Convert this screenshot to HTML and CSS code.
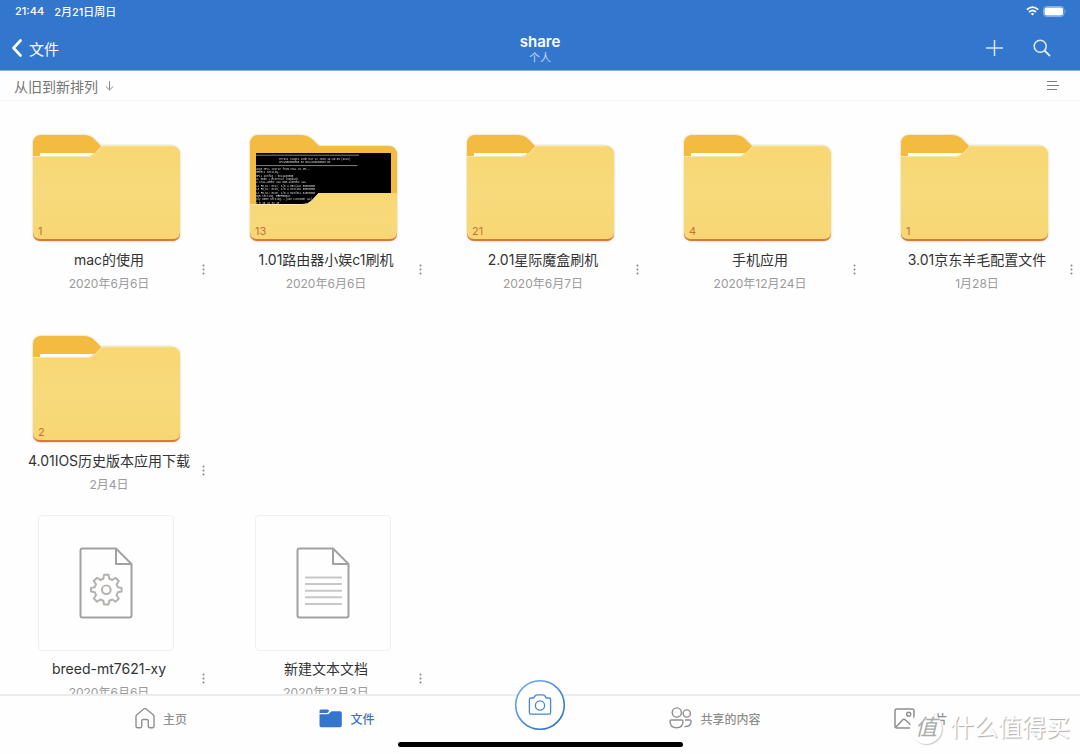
FILE: index.html
```html
<!DOCTYPE html>
<html lang="zh-CN">
<head>
<meta charset="utf-8">
<meta name="viewport" content="width=device-width, initial-scale=1">
<title>share</title>
<link rel="stylesheet" href="styles.css">
</head>
<body>
<svg class="defs" width="0" height="0" aria-hidden="true">
  <defs>
    <linearGradient id="paper" x1="0" y1="0" x2="0" y2="1">
      <stop offset="0" stop-color="#f8d773"/><stop offset=".5" stop-color="#f7da7b"/><stop offset="1" stop-color="#f7d774"/>
    </linearGradient>
    <linearGradient id="ring" x1="0" y1="0" x2="1" y2="1">
      <stop offset="0" stop-color="#76b2ea"/><stop offset="1" stop-color="#2469c9"/>
    </linearGradient>
    <symbol id="folder" viewBox="0 0 149 109">
      <path d="M1 30V9a8 8 0 0 1 8-8h42q7 0 11 4l7 7-14 18z" fill="#f4bb41"/>
      <path d="M8 19h54l-6 5H8z" fill="#fff"/>
      <path d="M1 30v70a7 7 0 0 0 7 7h133a7 7 0 0 0 7-7V70H1z" fill="#d9783a"/>
      <path d="M1 22.500h54q5 0 8-3l7-7.500h70a8 8 0 0 1 8 8v78q0 7-7 7H8q-7 0-7-7z" fill="url(#paper)"/>
      <path d="M1 22.500h54q5 0 8-3l7-7.500H140" fill="none" stroke="#fbe7a9"/>
    </symbol>
    <symbol id="page" viewBox="0 0 54 72">
      <path d="M37 1.500H3.500q-2 0-2 2v65q0 2 2 2h47q2 0 2-2V17zV17h15.500" fill="none" stroke="#a1a1a1" stroke-width="2" stroke-linejoin="round"/>
    </symbol>
    <symbol id="kebab" viewBox="0 0 3 11">
      <circle cx="1.500" cy="1.500" r="1"/><circle cx="1.500" cy="5.500" r="1"/><circle cx="1.500" cy="9.500" r="1"/>
    </symbol>
  </defs>
</svg>

<header class="top">
  <div class="status">
    <span>21:44</span><span>2月21日周日</span>
    <span class="status-icons">
      <svg width="13" height="10" viewBox="0 0 13 10"><g fill="none" stroke="#fff" stroke-width="1.700"><path d="M.8 3.700q5.700-5 11.400 0"/><path d="M3 6q3.500-3 7 0"/></g><path d="M4.700 7.700q1.800-1.400 3.600 0L6.500 9.600z" fill="#fff"/></svg>
      <svg width="24" height="11" viewBox="0 0 24 11"><rect x=".5" y=".5" width="20.500" height="10" rx="3" fill="none" stroke="#86b0e6"/><rect x="1.500" y="1.500" width="18.500" height="8" rx="2" fill="#fff"/><path d="M22.200 4q1.500 1.500 0 3z" fill="#86b0e6"/></svg>
    </span>
  </div>
  <div class="nav">
    <button class="back"><svg width="12" height="18" viewBox="0 0 12 18"><path d="M9.500 1.500 2.500 9l7 7.500" fill="none" stroke="#fff" stroke-width="2.600" stroke-linecap="round" stroke-linejoin="round"/></svg>文件</button>
    <div class="heading"><h1>share</h1><p>个人</p></div>
    <div class="actions">
      <button aria-label="添加"><svg width="18" height="18" viewBox="0 0 18 18"><path d="M9.500 1v16M1 9h17" stroke="#d9e6f8" stroke-width="1.500"/></svg></button>
      <button aria-label="搜索"><svg width="18" height="18" viewBox="0 0 18 18"><g fill="none" stroke="#dfeafa" stroke-width="1.500"><circle cx="7.200" cy="7.200" r="6"/><path d="m11.500 11.500 5.500 5.500" stroke-width="1.800"/></g></svg></button>
    </div>
  </div>
</header>

<div class="sort">
  <button class="order">从旧到新排列 <svg width="9" height="10" viewBox="0 0 9 10"><path d="M4.500 0v9M.8 5.500l3.700 3.500 3.700-3.500" fill="none" stroke="#8c8c8c"/></svg></button>
  <button aria-label="视图"><svg width="13" height="11" viewBox="0 0 13 11"><path d="M1 1.500h10M1 5.500h12M1 9.500h10" stroke="#7d7d7d" stroke-width="1.200"/></svg></button>
</div>

<main class="files">
  <section class="grid folders">
    <article class="item">
      <div class="folder"><svg><use href="#folder"/></svg><span class="count">1</span></div>
      <div class="meta"><div class="text"><h2>mac的使用</h2><p>2020年6月6日</p></div><button class="more" aria-label="更多"><svg><use href="#kebab"/></svg></button></div>
    </article>
    <article class="item">
      <div class="folder">
        <svg viewBox="0 0 149 109">
          <path d="M1 100V9a8 8 0 0 1 8-8h42q7 0 12 4l7 7h70a8 8 0 0 1 8 8v80z" fill="#f4bb41"/>
          <path d="M1 80v20a7 7 0 0 0 7 7h133a7 7 0 0 0 7-7V80z" fill="#d9783a"/>
          <svg x="7" y="19" width="135" height="52" viewBox="0 0 1350 520">
            <rect width="1350" height="520" fill="#000"/>
            <path d="M0 22h1030M0 126h1015" stroke="#bbb" stroke-width="7"/>
            <g class="terminal">
              <text x="230" y="65">MT7621   stage1 code Mar 12 2015 14:43:36 (ASIC)</text>
              <text x="230" y="100">CPU=500000000 HZ BUS=166666666 HZ</text>
              <text x="0" y="168">ange MPLL source from XTAL to CR...</text>
              <text x="0" y="202"> MEMPLL setting..</text>
              <text x="0" y="236">MPLL Config : 0x11100000</text>
              <text x="0" y="270">LL mode + External loopback</text>
              <text x="0" y="304">= XTAL-40Mhz === DDR-1200Mhz ===</text>
              <text x="0" y="338">L2 FB_DL: 0x12, 1/0 = 582/442 00000000</text>
              <text x="0" y="372">L3 FB_DL: 0x15, 1/0 = 573/451 00000000</text>
              <text x="0" y="406">L4 FB_DL: 0x10, 1/0 = 513/511 01000000</text>
              <text x="0" y="440"> DDR Setting, EEEPROM97</text>
              <text x="0" y="474">ply DDR3 Setting...(use customer AC)</text>
              <text x="0" y="508">       0    8   16   24   32   40</text>
            </g>
          </svg>
          <path d="M1 70.500h52q6 0 9-3l8-8.500h78v39q0 7-7 7H8q-7 0-7-7z" fill="url(#paper)"/>
          <path d="M1 70.500h52q6 0 9-3l8-8.500" fill="none" stroke="#fbe7a9"/>
        </svg>
        <span class="count">13</span>
      </div>
      <div class="meta"><div class="text"><h2>1.01路由器小娱c1刷机</h2><p>2020年6月6日</p></div><button class="more" aria-label="更多"><svg><use href="#kebab"/></svg></button></div>
    </article>
    <article class="item">
      <div class="folder"><svg><use href="#folder"/></svg><span class="count">21</span></div>
      <div class="meta"><div class="text"><h2>2.01星际魔盒刷机</h2><p>2020年6月7日</p></div><button class="more" aria-label="更多"><svg><use href="#kebab"/></svg></button></div>
    </article>
    <article class="item">
      <div class="folder"><svg><use href="#folder"/></svg><span class="count">4</span></div>
      <div class="meta"><div class="text"><h2>手机应用</h2><p>2020年12月24日</p></div><button class="more" aria-label="更多"><svg><use href="#kebab"/></svg></button></div>
    </article>
    <article class="item">
      <div class="folder"><svg><use href="#folder"/></svg><span class="count">1</span></div>
      <div class="meta"><div class="text"><h2>3.01京东羊毛配置文件</h2><p>1月28日</p></div><button class="more" aria-label="更多"><svg><use href="#kebab"/></svg></button></div>
    </article>
    <article class="item">
      <div class="folder"><svg><use href="#folder"/></svg><span class="count">2</span></div>
      <div class="meta"><div class="text"><h2>4.01IOS历史版本应用下载</h2><p>2月4日</p></div><button class="more" aria-label="更多"><svg><use href="#kebab"/></svg></button></div>
    </article>
  </section>
  <section class="grid">
    <article class="item">
      <div class="thumb"><svg viewBox="0 0 54 72"><use href="#page"/>
        <g transform="translate(3 4) scale(.9)" fill="none" stroke="#b5b1ae" stroke-width="2.200" stroke-linejoin="round"><circle cx="27" cy="43" r="4.800"/>
        <path d="M24.500 26.500h5l.8 4.300 3.400 1.400 3.600-2.500 3.600 3.600-2.500 3.600 1.400 3.300 4.200.8v4l-4.200.8-1.400 3.400 2.500 3.600-3.600 3.600-3.600-2.500-3.400 1.400-.8 4.200h-5l-.8-4.200-3.400-1.400-3.600 2.500-3.600-3.600 2.500-3.600-1.400-3.400-4.200-.8v-4l4.200-.8 1.400-3.300-2.500-3.600 3.600-3.600 3.600 2.500 3.400-1.400z"/></g></svg></div>
      <div class="meta"><div class="text"><h2>breed-mt7621-xy</h2><p>2020年6月6日</p></div><button class="more" aria-label="更多"><svg><use href="#kebab"/></svg></button></div>
    </article>
    <article class="item">
      <div class="thumb"><svg viewBox="0 0 54 72"><use href="#page"/>
        <path d="M9 30.500h37M9 37h37M9 43.700h37M9 50.300h37M9 57h37" stroke="#c8c7c6" stroke-width="2"/></svg></div>
      <div class="meta"><div class="text"><h2>新建文本文档</h2><p>2020年12月3日</p></div><button class="more" aria-label="更多"><svg><use href="#kebab"/></svg></button></div>
    </article>
  </section>
</main>

<footer class="bottom">
  <nav class="tabs">
    <a href="#"><svg width="20" height="21" viewBox="0 0 20 21"><path d="M1 8.500q0-1 .8-1.700l7-5.800q1.200-.8 2.400 0l7 5.800q.8.700.8 1.700V18q0 1.800-1.800 1.800h-2.400q-1.500 0-1.500-1.500V13q0-1.500-1.500-1.500H8.200q-1.500 0-1.500 1.500v5.300q0 1.500-1.500 1.500H2.800Q1 19.800 1 18z" fill="none" stroke="#8f8f8f" stroke-width="1.400"/></svg>主页</a>
    <a href="#" class="active" aria-current="page"><svg width="23" height="19" viewBox="0 0 23 19"><path d="M.5 4V2Q.5.500 2 .5h6.500Q10 .5 10 2 9.500 3.600 8 4zM.5 5.300h8q1 0 1.700-.8l1.400-1.500q.7-.8 1.800-.8H21q1.800 0 1.800 1.800v12.500q0 1.800-1.800 1.800H2.300Q.5 18.300.5 16.500z" fill="#3375cf"/></svg>文件</a>
    <button class="camera" aria-label="拍照"><svg width="52" height="52" viewBox="0 0 52 52"><circle cx="26" cy="26" r="24.300" fill="#fff" stroke="url(#ring)" stroke-width="1.600"/><g fill="none" stroke="#4586d8" stroke-width="1.300"><path d="M17 19h2.500l2-2.500q.6-.7 1.500-.7h6q.9 0 1.500.7l2 2.500H35q1.600 0 1.600 1.600v13q0 1.600-1.600 1.600H17q-1.600 0-1.600-1.600v-13Q15.400 19 17 19z"/><circle cx="26" cy="26.500" r="4.600"/></g></svg></button>
    <a href="#"><svg width="23" height="22" viewBox="0 0 23 22"><g fill="none" stroke="#8f8f8f" stroke-width="1.400"><circle cx="7.800" cy="5.500" r="4.600"/><circle cx="17.800" cy="6.500" r="3.600"/><path d="M2.300 13h10.400q1.300 0 1.300 1.300 0 6.500-6.500 6.500T1 14.300Q1 13 2.300 13zM16 13h4.700q1.400 0 1.400 1.300 0 5.500-6.600 5.300"/></g></svg>共享的内容</a>
    <a href="#"><svg width="21" height="21" viewBox="0 0 21 21"><g fill="none" stroke="#8f8f8f" stroke-width="1.500"><rect x="1" y="1" width="19" height="19" rx="2"/><circle cx="14.700" cy="6.300" r="2"/><path d="m2 19 6.500-7q1.500-1.500 3 0L19 19"/></g></svg>照片</a>
  </nav>
  <div class="indicator"></div>
</footer>
<div class="watermark"><span class="seal">值</span><span>什么值得买</span></div>
</body>
</html>
```

FILE: styles.css
```css
* { box-sizing: border-box; }
body {
  margin: 0;
  height: 100vh;
  display: flex;
  flex-direction: column;
  overflow: hidden;
  background: #fefefe;
  color: #333;
  font-family: Inter, "Noto Sans CJK SC", sans-serif;
}
h1, h2, p { margin: 0; font-weight: 400; }
button { padding: 0; border: 0; background: none; color: inherit; font: inherit; }
svg { display: block; }
.defs { position: absolute; }

.top { background: #3376cd; color: #fff; border-bottom: 1px solid #8ab0e3; }
.status {
  display: flex;
  align-items: center;
  gap: 10px;
  height: 22px;
  padding: 0 13px 0 15px;
  font-size: 11px;
  font-weight: 500;
}
.status-icons { display: flex; align-items: center; gap: 4px; margin-left: auto; }
.nav {
  display: grid;
  grid-template-columns: 1fr auto 1fr;
  align-items: center;
  height: 48px;
  padding: 4px 29px 0 11px;
}
.back { display: flex; align-items: center; gap: 6px; height: 44px; font-size: 15px; }
.heading { padding: 2px 0 0 18px; text-align: center; }
.heading h1 { font-size: 15px; line-height: 18px; font-weight: 600; }
.heading p { font-size: 11px; line-height: 14px; color: #c4d8f3; }
.actions { display: flex; justify-content: flex-end; gap: 30px; }

.sort {
  display: flex;
  align-items: center;
  justify-content: space-between;
  height: 30px;
  padding: 0 21px 0 14px;
  border-bottom: 1px solid #f5f5f5;
  color: #757575;
}
.order { display: flex; align-items: center; gap: 7px; font-size: 14px; }

.files { flex: 1; min-height: 0; overflow: hidden; padding-top: 33px; }
.grid {
  display: grid;
  grid-template-columns: repeat(5, 1fr);
  gap: 40px 23px;
  padding: 0 5px 0 13px;
}
.folders { margin-bottom: 19px; }
.folder { position: relative; width: 149px; margin-left: 19px; }
.folder > svg { width: 149px; height: 109px; filter: drop-shadow(0 0 1px #d8c9a0); }
.count { position: absolute; left: 6px; bottom: 5px; font-size: 11px; line-height: 14px; color: #c97034; }
.terminal { font-family: "Liberation Mono", monospace; font-size: 26px; fill: #ddd; white-space: pre; }
.meta { display: flex; align-items: flex-start; padding: 5px 0 0 5px; }
.text { flex: 1; text-align: center; white-space: nowrap; }
.text h2 { font-size: 14px; line-height: 24px; }
.text p { padding-top: 1px; font-size: 12px; line-height: 22px; color: #9b9b9b; }
.more { display: flex; justify-content: center; align-items: center; width: 7px; height: 24px; margin-top: 9px; }
.more svg { width: 3px; height: 11px; fill: #858585; }
.thumb {
  display: grid;
  place-items: center;
  width: 136px;
  height: 136px;
  margin: 0 0 1px 25px;
  border: 1px solid #efefef;
  border-radius: 4px;
}
.thumb svg { width: 54px; height: 72px; }

.bottom { height: 60px; border-top: 2px solid #ececec; background: #fefefe; }
.tabs {
  display: grid;
  grid-template-columns: 186fr 186fr 200fr 150fr 262fr;
  align-items: center;
  height: 46px;
  padding: 0 28px 2px 68px;
}
.tabs a {
  display: flex;
  align-items: center;
  justify-content: center;
  gap: 8px;
  color: #8f8f8f;
  font-size: 12px;
  font-weight: 500;
  text-decoration: none;
}
.tabs .active { color: #3375cf; }
.camera { justify-self: center; margin-top: -26px; }
.indicator { width: 285px; height: 5px; margin: 0 auto; border-radius: 3px; background: #000; }

.watermark {
  position: absolute;
  right: 10px;
  bottom: 9px;
  display: flex;
  align-items: center;
  gap: 8px;
  color: #fff;
  font-size: 24px;
  line-height: 34px;
  text-shadow: 1px 1px 1px #aaa;
}
.seal {
  width: 32px;
  height: 32px;
  border-radius: 50%;
  background: #fefefe;
  box-shadow: 1px 1px 1px #ccc;
  color: #aaa;
  font-size: 22px;
  line-height: 30px;
  font-style: italic;
  text-align: center;
  text-shadow: none;
}
```
